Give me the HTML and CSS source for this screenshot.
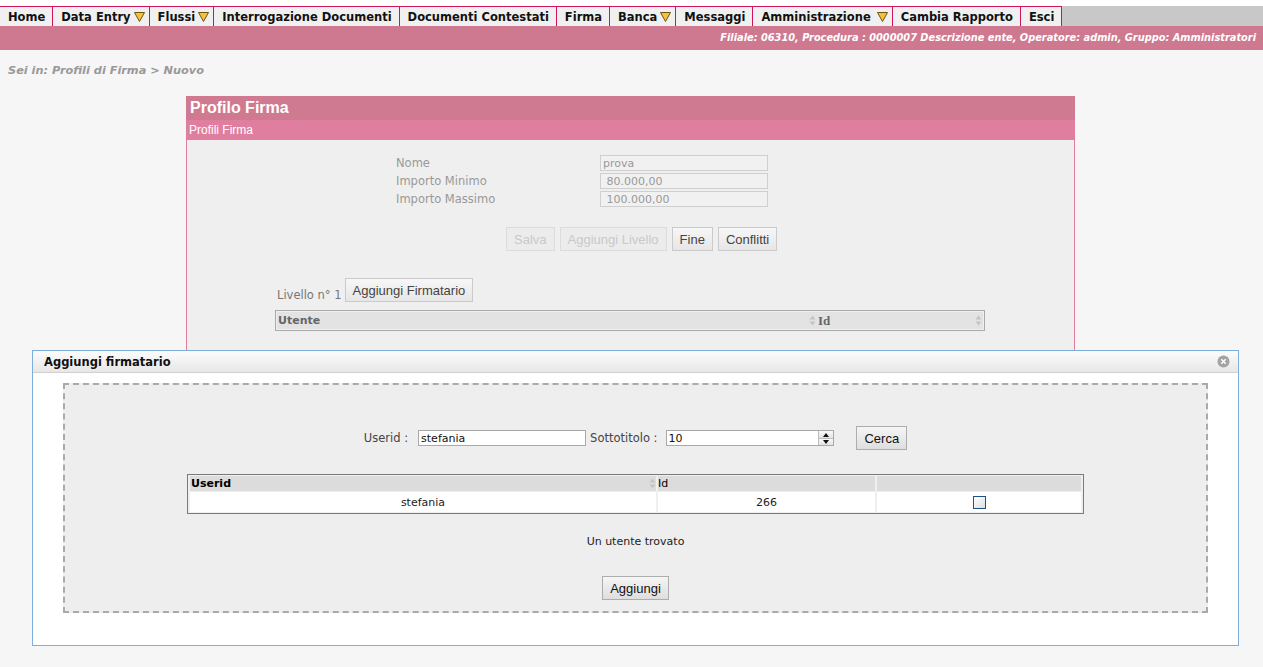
FILE: index.html
```html
<!DOCTYPE html>
<html lang="it">
<head>
<meta charset="utf-8">
<title>Profilo Firma</title>
<link rel="stylesheet" href="styles.css">
</head>
<body>
<div class="top">
  <nav class="menu">
    <a class="mi">Home</a>
    <a class="mi dd">Data Entry <svg class="tri" width="11" height="10" viewBox="0 0 11 10"><polygon points="0.5,0.5 10.5,0.5 5.5,9.5" /></svg></a>
    <a class="mi dd">Flussi <svg class="tri" width="11" height="10" viewBox="0 0 11 10"><polygon points="0.5,0.5 10.5,0.5 5.5,9.5" /></svg></a>
    <a class="mi">Interrogazione Documenti</a>
    <a class="mi">Documenti Contestati</a>
    <a class="mi">Firma</a>
    <a class="mi dd">Banca <svg class="tri" width="11" height="10" viewBox="0 0 11 10"><polygon points="0.5,0.5 10.5,0.5 5.5,9.5" /></svg></a>
    <a class="mi">Messaggi</a>
    <a class="mi dd wide">Amministrazione <svg class="tri" width="11" height="10" viewBox="0 0 11 10"><polygon points="0.5,0.5 10.5,0.5 5.5,9.5" /></svg></a>
    <a class="mi">Cambia Rapporto</a>
    <a class="mi">Esci</a>
  </nav>
  <div class="infobar">Filiale: 06310, Procedura : 0000007 Descrizione ente, Operatore: admin, Gruppo: Amministratori</div>
</div>

<div class="crumb">Sei in: Profili di Firma &gt; Nuovo</div>

<div class="panel">
  <div class="ph">Profilo Firma</div>
  <div class="psh">Profili Firma</div>
  <div class="pb">
    <div class="form">
      <span class="lbl">Nome</span><input class="fi" value="prova" disabled>
      <span class="lbl">Importo Minimo</span><input class="fi" value=" 80.000,00" disabled>
      <span class="lbl">Importo Massimo</span><input class="fi" value=" 100.000,00" disabled>
    </div>
    <div class="actions">
      <button class="btn" disabled>Salva</button>
      <button class="btn" disabled>Aggiungi Livello</button>
      <button class="btn">Fine</button>
      <button class="btn">Conflitti</button>
    </div>
    <div class="level">
      <span class="lvl">Livello n° 1</span>
      <button class="btn">Aggiungi Firmatario</button>
    </div>
    <div class="ghead">
      <div class="gh c1"><span>Utente</span><svg class="sort" width="7" height="11" viewBox="0 0 7 11"><polygon points="3.5,0.5 6.5,4.5 0.5,4.5"/><polygon points="0.5,6.5 6.5,6.5 3.5,10.5"/></svg></div>
      <div class="gh c2"><span class="serif">Id</span><svg class="sort" width="7" height="11" viewBox="0 0 7 11"><polygon points="3.5,0.5 6.5,4.5 0.5,4.5"/><polygon points="0.5,6.5 6.5,6.5 3.5,10.5"/></svg></div>
    </div>
  </div>
</div>

<div class="dialog">
  <div class="dtitle">
    <span>Aggiungi firmatario</span>
    <svg class="close" width="13" height="13" viewBox="0 0 13 13"><circle cx="6.5" cy="6.5" r="6" fill="#a3a3a3"/><path d="M4.3 4.3 L8.7 8.7 M8.7 4.3 L4.3 8.7" stroke="#fff" stroke-width="1.6"/></svg>
  </div>
  <div class="dbody">
    <div class="dash">
      <div class="search">
        <span class="slbl">Userid :</span>
        <input class="sin" value="stefania">
        <span class="slbl s2">Sottotitolo :</span>
        <div class="spin">
          <input class="spin-in" value="10">
          <div class="spin-btns">
            <span class="sb up"></span>
            <span class="sb dn"></span>
          </div>
        </div>
        <button class="btn dark">Cerca</button>
      </div>
      <table class="res">
        <thead>
          <tr>
            <th class="r1"><div class="thin"><span>Userid</span><svg class="sort" width="7" height="11" viewBox="0 0 7 11"><polygon points="3.5,0.5 6.5,4.5 0.5,4.5"/><polygon points="0.5,6.5 6.5,6.5 3.5,10.5"/></svg></div></th>
            <th class="r2 nb">Id</th>
            <th class="r3"></th>
          </tr>
        </thead>
        <tbody>
          <tr>
            <td>stefania</td>
            <td>266</td>
            <td><span class="cb"></span></td>
          </tr>
        </tbody>
      </table>
      <div class="found">Un utente trovato</div>
      <div class="addrow"><button class="btn dark">Aggiungi</button></div>
    </div>
  </div>
</div>
</body>
</html>
```

FILE: styles.css
```css
* { box-sizing: border-box; }
html, body { margin: 0; padding: 0; }
body {
  background: #f6f6f6;
  font-family: "DejaVu Sans", Verdana, sans-serif;
  font-size: 11px;
  color: #333;
  min-height: 667px;
  position: relative;
}

.top { background: #fff; padding-top: 6px; }

.menu {
  display: flex;
  height: 20px;
  background: #c8c8c8;
}
.mi {
  display: flex;
  align-items: center;
  gap: 5px;
  height: 20px;
  padding: 0 7px 0 8px;
  background: #f0f0f0;
  border-top: 1px solid #d2145a;
  border-right: 1px solid #d2145a;
  font-weight: bold;
  font-size: 11.5px;
  color: #111;
  white-space: nowrap;
}
.mi.dd { gap: 3px; padding-right: 4px; }
.mi.dd.wide { gap: 6px; }
.tri polygon { fill: #f6c040; stroke: #6e5410; stroke-width: 1; }

.infobar {
  height: 24px;
  line-height: 24px;
  background: #ce7990;
  color: #fff;
  font-style: italic;
  font-weight: bold;
  font-size: 9.8px;
  text-align: right;
  padding-right: 7px;
  white-space: nowrap;
}

.crumb {
  padding: 14px 8px 0;
  height: 27px;
  line-height: 13px;
  font-size: 11.3px;
  font-style: italic;
  font-weight: bold;
  color: #999;
}

.panel {
  width: 889px;
  margin: 19px 0 0 186px;
}
.ph {
  height: 24px;
  line-height: 24px;
  padding-left: 4px;
  background: #cf7a90;
  color: #fff;
  font-family: "Liberation Sans", Arial, sans-serif;
  font-weight: bold;
  font-size: 16px;
}
.psh {
  height: 20px;
  line-height: 20px;
  padding-left: 3px;
  background: #e07e9f;
  color: #fff;
  font-family: "Liberation Sans", Arial, sans-serif;
  font-size: 12px;
}
.pb {
  height: 240px;
  background: #efefef;
  border-left: 1px solid #e07e9f;
  border-right: 1px solid #e07e9f;
  padding-top: 15px;
}
.form {
  display: grid;
  grid-template-columns: 204px 168px;
  grid-auto-rows: 16px;
  row-gap: 2px;
  margin-left: 209px;
}
.lbl {
  line-height: 16px;
  color: #999;
  font-size: 11.5px;
  white-space: nowrap;
}
.fi {
  width: 168px;
  height: 16px;
  margin: 0;
  padding: 0 2px;
  border: 1px solid #cfcfcf;
  background: #f1f1f1;
  color: #999;
  font-family: "DejaVu Sans", Verdana, sans-serif;
  font-size: 11px;
}

.btn {
  height: 24px;
  margin: 0;
  padding: 0 7px;
  border: 1px solid #cacaca;
  border-radius: 0;
  background: linear-gradient(#f7f7f7, #e6e6e6);
  color: #444;
  font-family: "Liberation Sans", Arial, sans-serif;
  font-size: 13px;
}
.btn:disabled {
  color: #c9c9c9;
  border-color: #dcdcdc;
  background: #ececec;
}
.btn.dark {
  border-color: #adadad;
  background: linear-gradient(#f5f5f5, #dedede);
  color: #111;
}

.actions {
  display: flex;
  gap: 5px;
  margin: 20px 0 0 319px;
}

.level {
  display: flex;
  align-items: flex-end;
  gap: 3px;
  margin: 27px 0 0 90px;
}
.lvl {
  line-height: 13px;
  color: #777;
  font-size: 11.5px;
}

.ghead {
  display: flex;
  width: 710px;
  height: 21px;
  margin: 8px 0 0 88px;
  border: 1px solid #aaa;
  padding: 1px 1px;
  background: #efefef;
}
.gh {
  display: flex;
  align-items: center;
  justify-content: space-between;
  background: #e3e3e3;
  height: 17px;
  padding: 0 1px;
  font-weight: bold;
  color: #666;
}
.gh.c1 { width: 540px; }
.gh.c2 { flex: 1; }
.serif { font-family: "Liberation Serif", "Times New Roman", serif; font-size: 13px; }
.sort polygon { fill: #c4c4c4; }

.dialog {
  position: absolute;
  left: 32px;
  top: 350px;
  width: 1207px;
  height: 296px;
  border: 1px solid #7eaedb;
  background: #fff;
}
.dtitle {
  display: flex;
  align-items: center;
  justify-content: space-between;
  height: 22px;
  padding: 0 8px 0 11px;
  border-bottom: 1px solid #d0d0d0;
  background: linear-gradient(#fcfcfc, #e7e7e7);
  font-weight: bold;
  font-size: 11.5px;
  color: #111;
}
.dbody { padding: 10px 30px 0; }
.dash {
  height: 230px;
  border: 2px dashed #aaa;
  background: #eee;
  padding-top: 41px;
}

.search {
  display: flex;
  align-items: center;
  justify-content: center;
  height: 24px;
}
.slbl { color: #444; font-size: 11.5px; }
.sin {
  width: 168px;
  height: 16px;
  margin: 0 4px 0 10px;
  padding: 0 2px;
  border: 1px solid #a9a9a9;
  background: #fff;
  color: #111;
  font-family: "DejaVu Sans", Verdana, sans-serif;
  font-size: 11px;
}
.spin {
  display: flex;
  width: 168px;
  height: 16px;
  margin: 0 22px 0 9px;
  border: 1px solid #a9a9a9;
  background: #fff;
}
.spin-in {
  flex: 1;
  min-width: 0;
  height: 14px;
  margin: 0;
  padding: 0 1px;
  border: 0;
  background: #fff;
  color: #111;
  font-family: "DejaVu Sans", Verdana, sans-serif;
  font-size: 11px;
}
.spin-btns {
  display: flex;
  flex-direction: column;
  width: 15px;
  border-left: 1px solid #bdbdbd;
}
.sb {
  flex: 1;
  position: relative;
  background: linear-gradient(#fafafa, #e2e2e2);
}
.sb.up { border-bottom: 1px solid #bdbdbd; }
.sb::after {
  content: "";
  position: absolute;
  left: 4px;
  top: 2px;
  border-left: 3.5px solid transparent;
  border-right: 3.5px solid transparent;
}
.sb.up::after { border-bottom: 4px solid #111; }
.sb.dn::after { border-top: 4px solid #111; top: 1px; }

.res {
  width: 897px;
  margin: 24px auto 0;
  border: 1px solid #7a7a7a;
  border-spacing: 2px 1px;
  background: #efefef;
  font-size: 11px;
  table-layout: fixed;
}
.res th {
  height: 15px;
  padding: 0;
  background: #dcdcdc;
  text-align: left;
  font-weight: bold;
  color: #000;
}
.res th.nb { font-weight: normal; }
.res th.r1 { width: 466px; }
.res th.r2 { width: 217px; }
.thin { display: flex; align-items: center; justify-content: space-between; padding-left: 1px; }
.res td {
  height: 20px;
  padding: 0;
  background: #fff;
  text-align: center;
  color: #222;
}
.cb {
  display: inline-block;
  width: 13px;
  height: 13px;
  vertical-align: middle;
  border: 1px solid #1d5486;
  background: linear-gradient(135deg, #fff, #dedede);
}

.found {
  margin-top: 21px;
  line-height: 14px;
  text-align: center;
  color: #222;
}
.addrow {
  display: flex;
  justify-content: center;
  margin-top: 27px;
}
```
